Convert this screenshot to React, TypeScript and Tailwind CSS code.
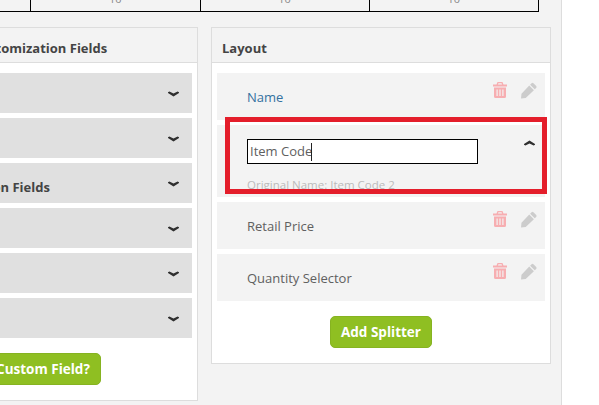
const Chevron = ({ up }: { up?: boolean }) => (
  <svg width="11" height="6" viewBox="0 0 11 6" className={`text-[#2f2f2f] ${up ? "rotate-180" : ""}`}>
    <path d="M0 1.2 L1.4 0.4 L5.5 2.6 L9.6 0.4 L11 1.2 L11 2 L5.5 5.6 L0 2 Z" fill="currentColor" />
  </svg>
);

const TrashIcon = () => (
  <svg width="14" height="16" viewBox="0 0 14 16" className="text-[#f7aeb1]">
    <path
      fillRule="evenodd"
      fill="currentColor"
      d="M4.5 0 H9.5 L10.5 2.5 H14 V4.5 H0 V2.5 H3.5 Z M5.4 1.2 L5 2.5 H9 L8.6 1.2 Z M1 5.5 H13 V14.5 Q13 16 11.5 16 H2.5 Q1 16 1 14.5 Z M3.5 7.5 V14 H4.7 V7.5 Z M6.4 7.5 V14 H7.6 V7.5 Z M9.3 7.5 V14 H10.5 V7.5 Z"
    />
  </svg>
);

const PencilIcon = () => (
  <svg width="16" height="17" viewBox="0 0 17 17" className="text-[#cccccc]">
    <path
      fill="currentColor"
      d="M11.2 0.9 Q12.2 0 13.2 0.7 L16.2 3.7 Q17 4.8 16.1 5.8 L14.6 7.3 L9.7 2.4 Z M8.8 3.3 L13.7 8.2 L5 16.5 L0 17 L0.5 12 Z"
    />
  </svg>
);

const LeftRow = ({ label }: { label?: string }) => (
  <div className="relative flex h-10 items-center justify-end bg-[#e0e0e0] pr-[13px] pt-[2px]">
    {label && (
      <span className="absolute left-[25px] top-[15px] whitespace-nowrap text-[13px] font-bold leading-[18px] text-[#444]">
        {label}
      </span>
    )}
    <Chevron />
  </div>
);

const LayoutRow = ({ label, blue }: { label: string; blue?: boolean }) => (
  <div className="flex h-[47px] justify-between bg-[#f3f3f3] pl-[30px] pr-2">
    <span className={`mt-[15px] text-[13px] leading-[18px] ${blue ? "text-[#33719f]" : "text-[#606060]"}`}>
      {label}
    </span>
    <div className="mt-[9px] flex items-start gap-[14px]">
      <TrashIcon />
      <PencilIcon />
    </div>
  </div>
);

const GreenButton = ({ label }: { label: string }) => (
  <button className="h-8 whitespace-nowrap rounded-[5px] border border-[#86b321] bg-[#8fbf22] px-[10px] text-[13.5px] font-bold text-white">
    {label}
  </button>
);

export default function App() {
  return (
    <div
      className="h-[405px] w-[599px] overflow-hidden bg-white"
      style={{ fontFamily: '"Open Sans", sans-serif' }}
    >
      <div className="h-full w-[562px] border-r border-[#dddddd] bg-[#f3f3f3]">
        <div className="ml-[-138px] flex h-3 w-[677px] border-b border-black">
          {[0, 1, 2, 3].map((i) => (
            <div key={i} className="flex-1 overflow-hidden border-r border-black text-center">
              <div className="mt-[-9px] text-[11px] leading-[16px] text-[#888]">10</div>
            </div>
          ))}
        </div>

        <div className="ml-[-142px] mt-[15px] flex items-start gap-[13px]">
          <div className="h-[374px] w-[340px] border border-[#dddddd] bg-white">
            <div className="h-[35px] whitespace-nowrap border-b border-[#dddddd] bg-[#f3f3f3] pl-[50px] pt-[11px] text-[13px] font-bold leading-[18px] text-[#444]">
              Available Customization Fields
            </div>
            <div className="flex flex-col gap-[5px] px-[5px] pt-[10px]">
              <LeftRow />
              <LeftRow />
              <LeftRow label="Order Information Fields" />
              <LeftRow />
              <LeftRow />
              <LeftRow />
            </div>
            <div className="mt-[15px] flex justify-center">
              <GreenButton label="Add Custom Field?" />
            </div>
          </div>

          <div className="relative h-[337px] w-[340px] border border-[#dddddd] bg-white">
            <div className="h-[35px] border-b border-[#dddddd] bg-[#f3f3f3] pl-[10px] pt-[11px] text-[13px] font-bold leading-[18px] text-[#444]">
              Layout
            </div>
            <div className="flex flex-col gap-[5px] px-[5px] pt-[10px]">
              <LayoutRow label="Name" blue />
              <div className="h-[72px] overflow-hidden bg-[#f3f3f3] pl-[30px] pr-[10px]">
                <div className="flex items-start justify-between pt-[14px]">
                  <div className="flex h-[25px] w-[231px] items-center border border-black bg-white pl-[2px] text-[13px] text-[#606060]">
                    Item Code
                    <span className="ml-[-1px] h-[18px] w-px bg-[#222]" />
                  </div>
                  <div className="mt-[1px]">
                    <Chevron up />
                  </div>
                </div>
                <div className="mt-[12px] text-[11.5px] leading-[18px] text-[#bbbbbb]">Original Name: Item Code 2</div>
              </div>
              <LayoutRow label="Retail Price" />
              <LayoutRow label="Quantity Selector" />
            </div>
            <div className="mt-[15px] flex justify-center">
              <GreenButton label="Add Splitter" />
            </div>
            <div className="absolute left-[13px] top-[89px] h-[77px] w-[322px] border-[5px] border-[#e41e2b]" />
          </div>
        </div>
      </div>
    </div>
  );
}
